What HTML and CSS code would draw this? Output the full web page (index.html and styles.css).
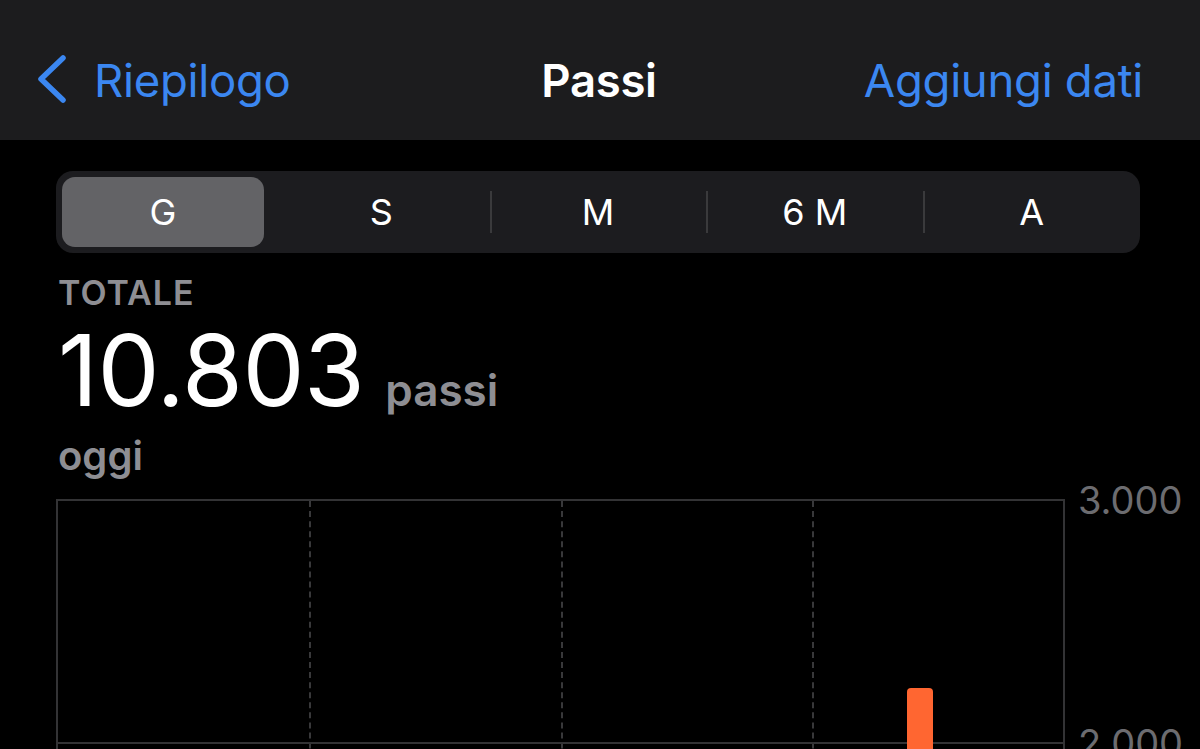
FILE: index.html
```html
<!DOCTYPE html>
<html>
<head>
    <title>Passi</title>
    <link rel="stylesheet" href="styles.css">
</head>
<body>
    <header class="nav">
        <a class="nav-back" href="#">
            <svg class="chevron" width="32" height="50" viewBox="0 0 32 50">
                <path d="M27 4 L5 25 L27 46" fill="none" stroke="currentColor" stroke-width="5.5" stroke-linecap="round" stroke-linejoin="round"/>
            </svg>
            <span>Riepilogo</span>
        </a>
        <h1 class="nav-title">Passi</h1>
        <a class="nav-action" href="#">Aggiungi dati</a>
    </header>

    <main class="content">
        <div class="segmented">
            <div class="segment selected"><span class="pill">G</span></div>
            <div class="segment">S</div>
            <div class="segment sep">M</div>
            <div class="segment sep">6 M</div>
            <div class="segment sep">A</div>
        </div>

        <div class="summary">
            <div class="summary-label">TOTALE</div>
            <div class="summary-value">10.803 <span class="unit">passi</span></div>
            <div class="summary-date">oggi</div>
        </div>

        <div class="chart">
            <div class="plot">
                <div class="col"></div>
                <div class="col"></div>
                <div class="col"></div>
                <div class="col"></div>
                <div class="hline"></div>
                <div class="bar" style="top: 187px; left: 849px;"></div>
            </div>
            <div class="axis">
                <div class="tick">3.000</div>
                <div class="tick">2.000</div>
            </div>
        </div>
    </main>
</body>
</html>
```

FILE: styles.css
```css
html, body {
    margin: 0;
    height: 749px;
    overflow: hidden;
}
body {
    background: #000;
    color: #fff;
    font-family: Inter, "Noto Sans", sans-serif;
}
a {
    text-decoration: none;
}
.nav {
    height: 140px;
    background: #1c1c1e;
    display: grid;
    grid-template-columns: 1fr auto 1fr;
    align-items: center;
    padding: 20px 38px 0 36px;
    box-sizing: border-box;
}
.nav-back {
    display: flex;
    align-items: center;
    gap: 26px;
    color: #3b87f1;
    font-size: 45.5px;
    letter-spacing: -0.3px;
}
.chevron {
    margin-top: -2px;
}
.nav-title {
    margin: 0;
    font-size: 45.5px;
    font-weight: 600;
    letter-spacing: -0.3px;
}
.nav-action {
    justify-self: end;
    margin-right: 19px;
    color: #3b87f1;
    font-size: 45.5px;
    letter-spacing: -0.3px;
}
.content {
    padding: 31px 60px 0 56px;
}
.segmented {
    display: grid;
    grid-template-columns: repeat(5, 1fr);
    height: 82px;
    background: #1c1c1f;
    border-radius: 17px;
}
.segment {
    display: flex;
    align-items: center;
    justify-content: center;
    font-size: 36px;
    font-weight: 400;
    position: relative;
}
.segment.selected {
    padding: 6px 9px 6px 6px;
}
.pill {
    flex: 1;
    align-self: stretch;
    display: flex;
    align-items: center;
    justify-content: center;
    background: #636366;
    border-radius: 13px;
}
.segment.sep::before {
    content: "";
    position: absolute;
    left: 0;
    top: 20px;
    bottom: 20px;
    width: 2px;
    background: #3a3a3c;
}
.summary {
    margin-top: 20px;
    padding-left: 2px;
}
.summary-label {
    color: #8e8e93;
    font-size: 34px;
    font-weight: 600;
    letter-spacing: 1px;
    line-height: 40px;
}
.summary-value {
    font-size: 98.5px;
    font-weight: 400;
    line-height: 104px;
    letter-spacing: -0.6px;
    margin-top: 6px;
}
.unit {
    color: #8e8e93;
    font-size: 44px;
    font-weight: 600;
    letter-spacing: 0;
    margin-left: -6px;
}
.summary-date {
    color: #8e8e93;
    font-size: 40px;
    font-weight: 600;
    line-height: 40px;
    margin-top: -6px;
}
.chart {
    display: flex;
    margin-top: 23px;
    margin-right: -60px;
}
.plot {
    flex: none;
    position: relative;
    width: 1009px;
    height: 320px;
    display: grid;
    grid-template-columns: repeat(4, 1fr);
    border: 2px solid #333335;
    border-bottom: none;
    box-sizing: border-box;
}
.col + .col {
    border-left: 2px dashed #38383a;
}
.hline {
    position: absolute;
    left: 0;
    right: 0;
    top: 241px;
    height: 2px;
    background: #333335;
}
.bar {
    position: absolute;
    width: 26px;
    height: 200px;
    background: #ff6631;
    border-radius: 4px 4px 0 0;
}
.axis {
    padding-left: 13px;
    color: #6c6c70;
    font-size: 38px;
    margin-top: -18px;
}
.tick {
    height: 243px;
    line-height: 38px;
}
```
